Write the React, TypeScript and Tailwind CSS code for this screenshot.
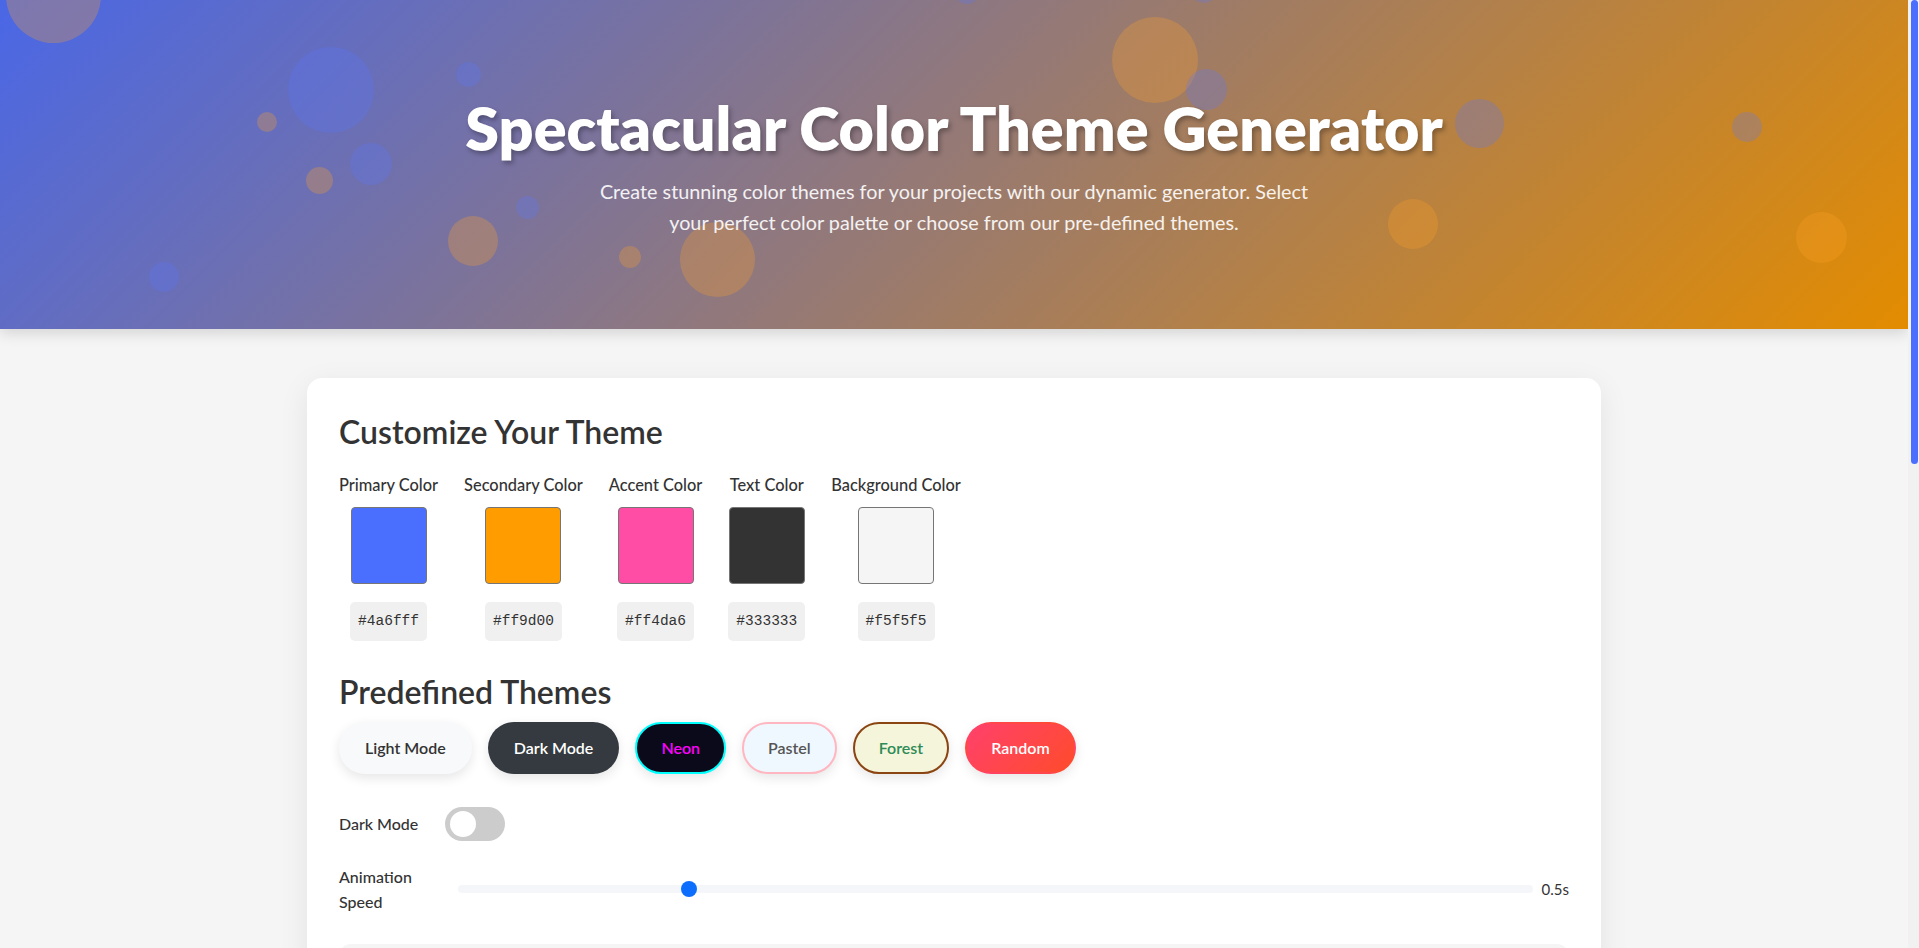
import React from "react";

type Bubble = { left: number; top: number; size: number; tone: "b" | "o" };

// пузыри в шапке (позиции взяты с макета)
const bubbles: Bubble[] = [
  { left: 6, top: -52, size: 95, tone: "o" },
  { left: 288, top: 47, size: 86, tone: "b" },
  { left: 456, top: 62, size: 25, tone: "b" },
  { left: 257, top: 112, size: 20, tone: "o" },
  { left: 350, top: 143, size: 42, tone: "b" },
  { left: 306, top: 167, size: 27, tone: "o" },
  { left: 516, top: 196, size: 23, tone: "b" },
  { left: 448, top: 216, size: 50, tone: "o" },
  { left: 619, top: 246, size: 22, tone: "o" },
  { left: 680, top: 222, size: 75, tone: "o" },
  { left: 149, top: 262, size: 30, tone: "b" },
  { left: 955, top: -20, size: 24, tone: "b" },
  { left: 1191, top: -23, size: 26, tone: "b" },
  { left: 1112, top: 17, size: 86, tone: "o" },
  { left: 1186, top: 69, size: 41, tone: "b" },
  { left: 1455, top: 99, size: 49, tone: "b" },
  { left: 1732, top: 112, size: 30, tone: "b" },
  { left: 1388, top: 199, size: 50, tone: "o" },
  { left: 1796, top: 212, size: 51, tone: "o" },
];

const colorFields: { label: string; value: string }[] = [
  { label: "Primary Color", value: "#4a6fff" },
  { label: "Secondary Color", value: "#ff9d00" },
  { label: "Accent Color", value: "#ff4da6" },
  { label: "Text Color", value: "#333333" },
  { label: "Background Color", value: "#f5f5f5" },
];

const themes: { name: string; className: string }[] = [
  { name: "Light Mode", className: "bg-[#f8f9fa] text-[#333] border-transparent" },
  { name: "Dark Mode", className: "bg-[#343a40] text-white border-transparent font-bold" },
  { name: "Neon", className: "bg-[#0a0a1a] text-[#ff00ff] border-[#00ffff] font-bold" },
  { name: "Pastel", className: "bg-[#f0f8ff] text-[#555] border-[#ffb6c1] font-normal" },
  { name: "Forest", className: "bg-[#f5f5dc] text-[#2e8b57] border-[#8b4513]" },
  {
    name: "Random",
    className: "bg-[linear-gradient(135deg,#ff416c,#ff4b2b)] text-white border-transparent font-bold",
  },
];

const speed = { min: 0.1, max: 2, value: 0.5 };

const App = () => {
  const ratio = (speed.value - speed.min) / (speed.max - speed.min);

  return (
    <div className="flex h-screen overflow-hidden bg-[#f5f5f5] text-[#333] [font-family:Lato,sans-serif]">
      <div className="flex-1 min-w-0 h-full overflow-y-auto [scrollbar-width:none]">
        {/* Шапка */}
        <header className="relative overflow-hidden h-[329px] flex flex-col items-center justify-center text-center bg-[linear-gradient(135deg,#4a67e6_0%,#e38c00_100%)] shadow-[0_4px_14px_rgba(0,0,0,0.14)]">
          {bubbles.map((b, i) => (
            <div
              key={i}
              className={`absolute rounded-full pointer-events-none ${
                b.tone === "b" ? "bg-[rgba(90,120,255,0.26)]" : "bg-[rgba(255,160,40,0.28)]"
              }`}
              style={{ left: b.left, top: b.top, width: b.size, height: b.size }}
            />
          ))}
          <h1 className="relative text-[61px] leading-[1.2] font-extrabold text-white [text-shadow:2px_3px_5px_rgba(0,0,0,0.3)]">
            Spectacular Color Theme Generator
          </h1>
          <p className="relative mt-3 max-w-[725px] text-[19.8px] leading-[1.55] text-white/90">
            Create stunning color themes for your projects with our dynamic generator. Select
            your perfect color palette or choose from our pre-defined themes.
          </p>
        </header>

        {/* Основная карточка */}
        <main className="pt-[49px] pb-12">
          <div className="mx-auto w-[1294px] bg-white rounded-[15px] shadow-[0_8px_30px_rgba(0,0,0,0.08)] px-8 pt-[35px] pb-8">
            <h2 className="text-[32px] leading-[1.2] font-semibold text-[#333]">Customize Your Theme</h2>

            {/* Выбор цветов */}
            <div className="flex gap-[26px] mt-[22px]">
              {colorFields.map((item) => (
                <div key={item.label} className="flex flex-col items-center">
                  <div className="text-[16.4px] leading-6 font-medium text-[#333]">{item.label}</div>
                  <div
                    className="mt-[10px] w-[76px] h-[77px] rounded-[4px] border border-[#767676]"
                    style={{ backgroundColor: item.value }}
                  />
                  <div className="mt-[18px] px-2 py-2 rounded-[5px] bg-[#f0f0f0] text-[14.5px] leading-[23px] text-[#333] [font-family:'Liberation_Mono',monospace]">
                    {item.value}
                  </div>
                </div>
              ))}
            </div>

            <h2 className="mt-[32px] text-[32px] leading-[1.2] font-semibold text-[#333]">Predefined Themes</h2>

            {/* Готовые темы */}
            <div className="flex gap-4 mt-[10px]">
              {themes.map((t) => (
                <button
                  key={t.name}
                  className={`px-6 py-[14px] border-2 rounded-full text-[16px] leading-5 font-semibold shadow-[0_4px_12px_rgba(0,0,0,0.1)] ${t.className}`}
                >
                  {t.name}
                </button>
              ))}
            </div>

            {/* Тёмный режим */}
            <div className="flex items-center gap-4 mt-[33px]">
              <div className="w-[90px] text-[16px] font-medium">Dark Mode</div>
              <div className="relative w-[60px] h-[34px] rounded-full bg-[#ccc]">
                <div className="absolute left-[5px] top-[4px] w-[26px] h-[26px] rounded-full bg-white" />
              </div>
            </div>

            {/* Скорость анимации */}
            <div className="flex items-center mt-[23px]">
              <div className="w-[103px] text-[16px] leading-[1.6] font-medium">Animation Speed</div>
              <div className="relative flex-1 ml-4 h-2 rounded-full bg-[#f4f6f9]">
                <div
                  className="absolute top-[-4px] w-4 h-4 rounded-full bg-[#0d6efd]"
                  style={{ left: `calc((100% - 16px) * ${ratio})` }}
                />
              </div>
              <span className="ml-[9px] text-[15px] text-[#333]">{speed.value}s</span>
            </div>

            {/* Превью темы */}
            <div className="mt-[29px] h-[300px] rounded-xl bg-[#f5f5f5]" />
          </div>
        </main>
      </div>

      {/* Полоса прокрутки */}
      <div className="w-[11px] shrink-0 bg-[#f1f1f1]">
        <div className="ml-[3px] w-[7px] h-[464px] rounded-full bg-[#4a6fff]" />
      </div>
    </div>
  );
};

export default App;
